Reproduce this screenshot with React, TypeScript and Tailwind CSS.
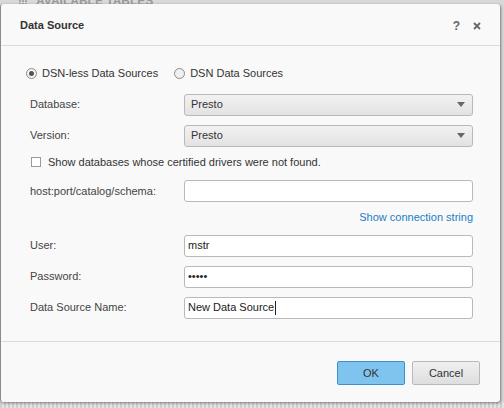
import React from "react";

const font = { fontFamily: '"Liberation Sans", Arial, sans-serif' };

function Caret() {
  return (
    <svg width="8" height="5" viewBox="0 0 8 5" className="shrink-0">
      <path d="M0 0 H8 L4 5 Z" fill="#666" />
    </svg>
  );
}

function SelectBox({ value }: { value: string }) {
  return (
    <div className="flex h-[22px] w-[289px] items-center justify-between rounded-[3px] border border-[#b9b9b9] bg-gradient-to-b from-[#f2f2f2] to-[#e2e2e2] pl-[6px] pr-[7px] text-[#333]">
      <span>{value}</span>
      <Caret />
    </div>
  );
}

function TextBox({ value, caret }: { value?: string; caret?: boolean }) {
  return (
    <div className="flex h-[22px] w-[289px] items-center rounded-[3px] border border-[#b9b9b9] bg-white pl-[3px] text-[#222]">
      <span>{value}</span>
      {caret && <span className="ml-[1px] h-[14px] w-px bg-[#222]" />}
    </div>
  );
}

function Row({ label, children }: { label: string; children: React.ReactNode }) {
  return (
    <div className="flex h-[22px] items-center">
      <div className="w-[154px] text-[#444]">{label}</div>
      {children}
    </div>
  );
}

export default function App() {
  return (
    <div
      className="relative h-[408px] w-[504px] overflow-hidden bg-[#d9d9d9] text-[11px]"
      style={font}
    >
      {/* page content behind the dialog */}
      <div className="absolute left-[19px] top-[-8px] flex items-center gap-[9px] text-[12px] font-bold text-[#9a9a9a]">
        <span className="grid grid-cols-3 gap-px">
          {Array.from({ length: 9 }).map((_, i) => (
            <span key={i} className="h-[2px] w-[2px] bg-[#a5a5a5]" />
          ))}
        </span>
        <span>AVAILABLE TABLES</span>
      </div>
      <div className="absolute left-0 top-[402px] h-[6px] w-full bg-[repeating-linear-gradient(90deg,#cfcfcf_0,#cfcfcf_2px,#e4e4e4_2px,#e4e4e4_4px)]" />

      {/* dialog window */}
      <div className="absolute left-0 top-[4px] flex h-[398px] w-[500px] flex-col rounded-[3px] border-l border-[#8c8c8c] bg-[#f9f9f9] shadow-[1px_1px_3px_rgba(0,0,0,0.45)]">
        <div className="flex h-[42px] items-center justify-between border-b border-[#dcdcdc] pl-[19px] pr-[19px] pt-[2px]">
          <span className="text-[11px] font-bold text-[#333]">Data Source</span>
          <div className="flex items-center gap-[13px] text-[#666]">
            <span className="text-[12px] font-bold">?</span>
            <svg width="8" height="8" viewBox="0 0 8 8">
              <path d="M1 1 L7 7 M7 1 L1 7" stroke="#666" strokeWidth="1.8" />
            </svg>
          </div>
        </div>

        <div className="flex flex-1 flex-col border-b border-[#dcdcdc] pl-[25px] pt-[19px]">
          <div className="flex items-center text-[#333]">
            <span className="flex h-[11px] w-[11px] items-center justify-center rounded-full border border-[#8a8a8a] bg-[#f4f4f4]">
              <span className="h-[5px] w-[5px] rounded-full bg-[#555]" />
            </span>
            <span className="ml-[5px]">DSN-less Data Sources</span>
            <span className="ml-[16px] h-[11px] w-[11px] rounded-full border border-[#8a8a8a] bg-[#f0f0f0]" />
            <span className="ml-[5px]">DSN Data Sources</span>
          </div>

          <div className="mt-[12px] flex flex-col gap-[9px] pl-[4px]">
            <Row label="Database:">
              <SelectBox value="Presto" />
            </Row>
            <Row label="Version:">
              <SelectBox value="Presto" />
            </Row>
          </div>

          <div className="mt-[7px] flex items-center pl-[5px] text-[#333]">
            <span className="h-[10px] w-[10px] border border-[#9a9a9a] bg-white" />
            <span className="ml-[7px]">Show databases whose certified drivers were not found.</span>
          </div>

          <div className="mt-[10px] flex flex-col pl-[4px]">
            <Row label="host:port/catalog/schema:">
              <TextBox />
            </Row>
            <div className="mt-[7px] w-[443px] text-right text-[#1a7dc4]">Show connection string</div>
          </div>

          <div className="mt-[9px] flex flex-col gap-[9px] pl-[4px]">
            <Row label="User:">
              <TextBox value="mstr" />
            </Row>
            <Row label="Password:">
              <TextBox value="•••••" />
            </Row>
            <Row label="Data Source Name:">
              <TextBox value="New Data Source" caret />
            </Row>
          </div>
        </div>

        <div className="flex h-[60px] items-start justify-end gap-[7px] pr-[20px] pt-[19px]">
          <button className="h-[24px] w-[68px] rounded-[2px] border border-[#3d8fd0] bg-[#7ec4ef] text-[11px] text-[#333]">
            OK
          </button>
          <button className="h-[24px] w-[68px] rounded-[2px] border border-[#b9b9b9] bg-gradient-to-b from-[#f0f0f0] to-[#dedede] text-[11px] text-[#333]">
            Cancel
          </button>
        </div>
      </div>
    </div>
  );
}
